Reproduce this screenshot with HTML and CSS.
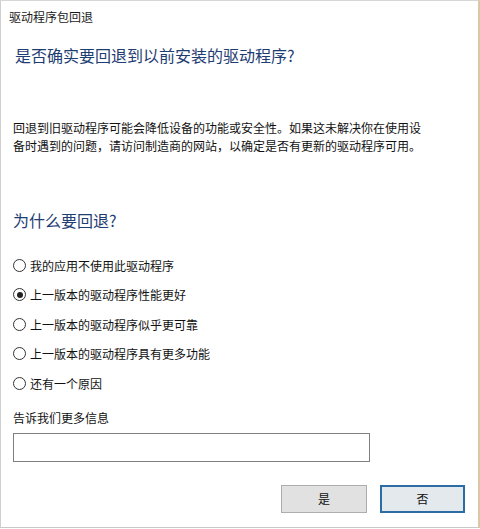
FILE: index.html
```html
<!DOCTYPE html>
<html lang="zh-CN">
<head>
<meta charset="utf-8">
<title>驱动程序包回退</title>
<link rel="stylesheet" href="styles.css">
</head>
<body>
<div class="window">
  <div class="titlebar">驱动程序包回退</div>
  <div class="content">
    <h1 class="main-title">是否确实要回退到以前安装的驱动程序?</h1>
    <p class="desc">回退到旧驱动程序可能会降低设备的功能或安全性。如果这未解决你在使用设<br>备时遇到的问题，请访问制造商的网站，以确定是否有更新的驱动程序可用。</p>
    <h2 class="sub-title">为什么要回退?</h2>
    <div class="options">
      <label class="option"><span class="radio"></span>我的应用不使用此驱动程序</label>
      <label class="option"><span class="radio checked"></span>上一版本的驱动程序性能更好</label>
      <label class="option"><span class="radio"></span>上一版本的驱动程序似乎更可靠</label>
      <label class="option"><span class="radio"></span>上一版本的驱动程序具有更多功能</label>
      <label class="option"><span class="radio"></span>还有一个原因</label>
    </div>
    <div class="more-label">告诉我们更多信息</div>
    <div class="textbox"></div>
    <div class="buttons">
      <button class="btn">是</button>
      <button class="btn btn-default">否</button>
    </div>
  </div>
</div>
</body>
</html>
```

FILE: styles.css
```css
html, body {
  margin: 0;
  padding: 0;
  background: #ffffff;
}

body {
  width: 480px;
  height: 529px;
  overflow: hidden;
  font-family: "Noto Sans CJK SC", "Noto Sans", sans-serif;
  color: #111111;
}

.window {
  box-sizing: border-box;
  width: 480px;
  height: 528px;
  background: #ffffff;
  border-top: 1px solid #d6d6d6;
  border-left: 1px solid #cfcfcf;
  border-right: 2px solid #d9c7a6;
  border-bottom: 1px solid #c9c9c9;
}

.titlebar {
  height: 33px;
  box-sizing: border-box;
  padding: 8px 0 0 8px;
  font-size: 12px;
  line-height: 16px;
  color: #1a1a1a;
}

.content {
  padding: 0 13px 0 12px;
}

.main-title {
  margin: 11px 0 0 2px;
  font-size: 16px;
  line-height: 20px;
  font-weight: normal;
  color: #1e3d72;
}

.desc {
  margin: 54px 0 0 0;
  font-size: 12px;
  line-height: 18px;
  color: #111111;
}

.sub-title {
  margin: 55px 0 0 0;
  font-size: 16px;
  line-height: 20px;
  font-weight: normal;
  color: #1e3d72;
}

.options {
  margin-top: 26.5px;
  display: flex;
  flex-direction: column;
  gap: 12.5px;
}

.option {
  display: flex;
  align-items: center;
  gap: 4px;
  height: 17px;
  font-size: 12px;
  line-height: 17px;
  color: #111111;
}

.radio {
  position: relative;
  box-sizing: border-box;
  width: 13px;
  height: 13px;
  border: 1px solid #333333;
  border-radius: 50%;
  background: #ffffff;
  flex: none;
}

.radio.checked::after {
  content: "";
  position: absolute;
  left: 2.5px;
  top: 2.5px;
  width: 6px;
  height: 6px;
  border-radius: 50%;
  background: #222222;
}

.more-label {
  margin-top: 17.5px;
  font-size: 12px;
  line-height: 18px;
  color: #111111;
}

.textbox {
  margin-top: 6px;
  box-sizing: border-box;
  width: 357px;
  height: 29px;
  border: 1px solid #7f7f7f;
  background: #ffffff;
}

.buttons {
  margin-top: 23px;
  display: flex;
  justify-content: flex-end;
  gap: 13px;
  padding-right: 0;
}

.btn {
  box-sizing: border-box;
  width: 86px;
  height: 28px;
  padding: 0;
  border: 1px solid #adadad;
  background: #e1e1e1;
  font-family: "Noto Sans CJK SC", "Noto Sans", sans-serif;
  font-size: 12px;
  line-height: 16px;
  color: #111111;
}

.btn-default {
  width: 85px;
  border: 2px solid #2a6ca3;
  background: #e4e9ee;
}
```
